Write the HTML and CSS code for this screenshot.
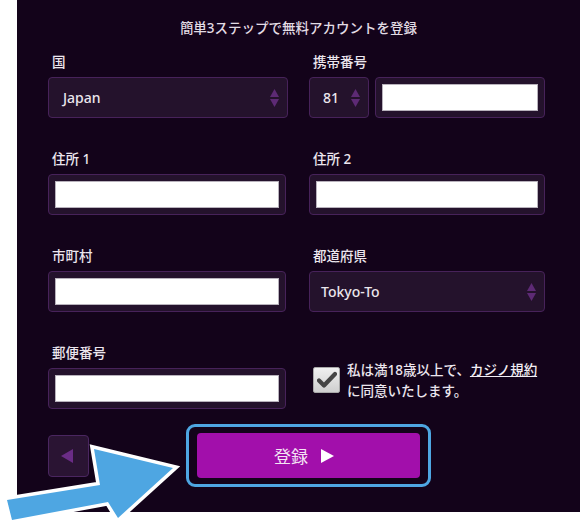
FILE: index.html
```html
<!DOCTYPE html>
<html lang="ja">
<head>
    <meta charset="UTF-8">
    <title>無料アカウント登録</title>
    <link rel="stylesheet" href="styles.css">
</head>
<body>
<div class="page">
    <form class="panel">
        <p class="title">簡単3ステップで無料アカウントを登録</p>

        <div class="grid">
            <div class="field">
                <label>国</label>
                <div class="select">
                    <span>Japan</span>
                    <svg class="updown" width="9" height="18" viewBox="0 0 9 18"><path d="M4.5 0L9 8H0z M0 10h9l-4.5 8z"/></svg>
                </div>
            </div>
            <div class="field">
                <label>携帯番号</label>
                <div class="phone">
                    <div class="select code">
                        <span>81</span>
                        <svg class="updown" width="9" height="18" viewBox="0 0 9 18"><path d="M4.5 0L9 8H0z M0 10h9l-4.5 8z"/></svg>
                    </div>
                    <div class="box grow"><input type="text"></div>
                </div>
            </div>

            <div class="field">
                <label>住所 1</label>
                <div class="box short"><input type="text"></div>
            </div>
            <div class="field">
                <label>住所 2</label>
                <div class="box"><input type="text"></div>
            </div>

            <div class="field">
                <label>市町村</label>
                <div class="box short"><input type="text"></div>
            </div>
            <div class="field">
                <label>都道府県</label>
                <div class="select pref">
                    <span>Tokyo-To</span>
                    <svg class="updown" width="9" height="18" viewBox="0 0 9 18"><path d="M4.5 0L9 8H0z M0 10h9l-4.5 8z"/></svg>
                </div>
            </div>

            <div class="field">
                <label>郵便番号</label>
                <div class="box short"><input type="text"></div>
            </div>
            <div class="agree">
                <span class="check">
                    <svg width="20" height="18" viewBox="0 0 20 18"><path d="M2 9.5l5 5L18 3" fill="none" stroke="#454545" stroke-width="4.2" stroke-linecap="round" stroke-linejoin="round"/></svg>
                </span>
                <p>私は満18歳以上で、<a href="#">カジノ規約</a><br>に同意いたします。</p>
            </div>
        </div>

        <div class="actions">
            <button type="button" class="back"><span class="tri-left"></span></button>
            <div class="focus">
                <button type="submit" class="submit">登録<span class="tri-right"></span></button>
            </div>
        </div>
    </form>

    <!-- pointer arrow on top of the form -->
    <svg class="pointer" width="580" height="532" viewBox="0 0 580 532">
        <polygon points="7,500 100,485 94,449 173,468 118,518 108,502 12,520" fill="#4ea6e2" stroke="#fff" stroke-width="7" stroke-linejoin="miter" paint-order="stroke"/>
    </svg>
</div>
</body>
</html>
```

FILE: styles.css
```css
body {
    margin: 0;
    background-color: #fff;
    font-family: "Noto Sans", "Noto Sans CJK JP", sans-serif;
}

.page {
    position: relative;
    width: 580px;
    height: 532px;
}

.panel {
    margin-left: 17px;
    width: 563px;
    height: 512px;
    box-sizing: border-box;
    padding-top: 18px;
    background-color: #13031a;
    color: #ece6ee;
}

.title {
    margin: 0;
    text-align: center;
    font-size: 13.5px;
    font-weight: 500;
    line-height: 20px;
    color: #e2dce4;
}

.grid {
    display: grid;
    grid-template-columns: 240px 236px;
    column-gap: 21px;
    row-gap: 33px;
    margin: 16px 0 0 31px;
}

.field label {
    display: block;
    font-size: 13.5px;
    font-weight: 500;
    line-height: 16px;
    margin: 0 0 7px 4px;
}

.select,
.box {
    height: 41px;
    box-sizing: border-box;
    background-color: #24122c;
    border: 1px solid #47225a;
    border-radius: 4px;
}

.select {
    display: flex;
    align-items: center;
    justify-content: space-between;
    padding: 0 8px 0 14px;
    font-size: 14px;
    font-weight: 500;
    color: #ebe6ed;
}

.select.pref {
    padding-left: 11px;
}

.updown {
    fill: #5d2a75;
}

.box {
    padding: 6px;
}

.box.short {
    width: 238px;
}

.box input {
    display: block;
    width: 100%;
    height: 100%;
    box-sizing: border-box;
    margin: 0;
    border: 1px solid #b8b2bc;
    background-color: #fff;
}

.phone {
    display: flex;
    gap: 6px;
}

.select.code {
    width: 60px;
    flex: none;
    padding-left: 13px;
}

.grow {
    flex: 1;
}

.agree {
    display: flex;
    align-items: flex-start;
    gap: 7px;
    padding: 15px 0 0 4px;
}

.check {
    display: flex;
    align-items: center;
    justify-content: center;
    width: 27px;
    height: 26px;
    margin-top: 7px;
    box-sizing: border-box;
    border: 1px solid #a9a9a9;
    border-radius: 2px;
    background: linear-gradient(#f0f0f0, #cfcfcf);
}

.agree p {
    margin: 0;
    font-size: 13.5px;
    font-weight: 500;
    line-height: 21px;
}

.agree a {
    color: #f2eef4;
    text-decoration: underline;
}

.actions {
    display: flex;
    align-items: center;
    margin: 15px 0 0 31px;
}

.back {
    width: 41px;
    height: 42px;
    padding: 0;
    display: flex;
    align-items: center;
    justify-content: center;
    background-color: #2a1433;
    border: 1px solid #4a2660;
    border-radius: 4px;
}

.tri-left {
    width: 0;
    height: 0;
    border-top: 7px solid transparent;
    border-bottom: 7px solid transparent;
    border-right: 12px solid #6a2c86;
    margin-right: 4px;
}

.focus {
    margin-left: 97px;
    padding: 6px 8px;
    border: 3px solid #4ea6e2;
    border-radius: 9px;
}

.submit {
    display: flex;
    align-items: center;
    justify-content: center;
    width: 223px;
    height: 45px;
    padding: 0 9px 0 0;
    border: none;
    border-radius: 4px;
    background-color: #a20fab;
    color: #f4e4f4;
    font-family: "Noto Sans CJK JP", sans-serif;
    font-size: 17px;
}

.tri-right {
    width: 0;
    height: 0;
    margin-left: 13px;
    border-top: 7px solid transparent;
    border-bottom: 7px solid transparent;
    border-left: 13px solid #fff;
}

.pointer {
    position: absolute;
    top: 0;
    left: 0;
    pointer-events: none;
}
```
